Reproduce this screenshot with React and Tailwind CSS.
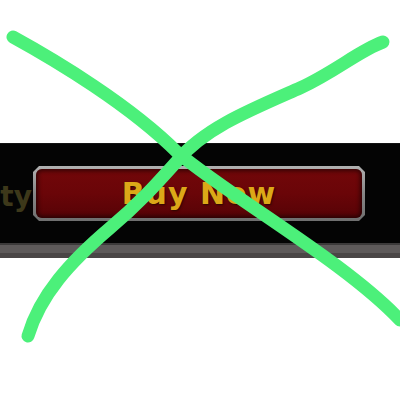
import React from 'react';

// hand-drawn cross over the store bar
const strokeA = 'M13 37 C 55 60, 130 105, 178 153 C 235 200, 345 262, 400 320';
const strokeB = 'M28 336 C 40 295, 70 262, 110 228 C 140 203, 160 180, 178 160 C 205 128, 250 110, 300 88 C 335 72, 360 50, 383 42';

const App = () => {
  return (
    <div className="relative w-[400px] h-[400px] bg-white overflow-hidden" style={{ fontFamily: '"DejaVu Sans", sans-serif' }}>
      <div className="h-[143px]" />

      <div className="h-[100px] bg-[#040404] border-t border-[#141414] flex items-center">
        <div className="w-[33px] flex justify-end">
          <span className="text-[28px] font-bold leading-none text-[#3d381a] pr-[1px] pt-[6px]">ty</span>
        </div>
        <div className="w-[332px] h-[55px] p-[3px] bg-gradient-to-b from-[#b0b0b0] via-[#878787] to-[#6f6f6f] [clip-path:polygon(6px_0,calc(100%-6px)_0,100%_6px,100%_calc(100%-6px),calc(100%-6px)_100%,6px_100%,0_calc(100%-6px),0_6px)]">
          <div className="w-full h-full rounded-[6px] bg-gradient-to-b from-[#720709] via-[#6a0508] to-[#560306] shadow-[inset_0_0_4px_2px_rgba(0,0,0,0.55)] flex items-center justify-center">
            <span className="text-[30px] font-bold leading-none tracking-[1px] text-[#dca818] [text-shadow:1px_1px_2px_#2a0800]">Buy Now</span>
          </div>
        </div>
      </div>

      <div className="h-[2px] bg-[#3c3a3a]" />
      <div className="h-[8px] bg-[#5e5a5a]" />
      <div className="h-[5px] bg-[#4a4646]" />

      <svg className="absolute inset-0" width="400" height="400" viewBox="0 0 400 400">
        <path d={strokeA} fill="none" stroke="#4cf07a" strokeWidth="13" strokeLinecap="round" strokeLinejoin="round" />
        <path d={strokeB} fill="none" stroke="#4cf07a" strokeWidth="13" strokeLinecap="round" strokeLinejoin="round" />
      </svg>
    </div>
  );
};

export default App;
